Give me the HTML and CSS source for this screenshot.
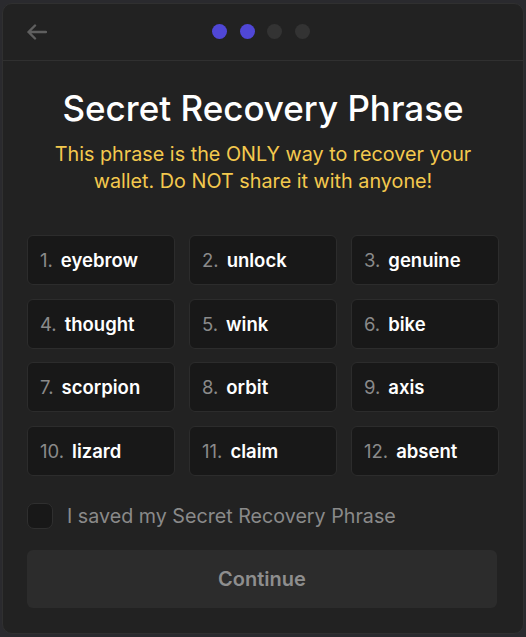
FILE: index.html
```html
<!DOCTYPE html>
<html>
<head>
<meta charset="utf-8">
<link rel="stylesheet" href="styles.css">
</head>
<body>
<div class="panel">
  <div class="header">
    <div class="back">
      <svg width="20" height="16" viewBox="0 0 20 16"><path d="M1.5 8H19M8 1.5L1.5 8L8 14.5" fill="none" stroke="#5f5f5f" stroke-width="2.4" stroke-linecap="round" stroke-linejoin="round"/></svg>
    </div>
    <div class="dots">
      <span class="dot on"></span><span class="dot on"></span><span class="dot"></span><span class="dot"></span>
    </div>
    <div></div>
  </div>
  <div class="content">
    <h1 class="title">Secret Recovery Phrase</h1>
    <p class="warning">This phrase is the ONLY way to recover your wallet. Do NOT share it with anyone!</p>
    <div class="grid">
      <div class="word"><span class="num">1.</span><span class="w">eyebrow</span></div>
      <div class="word"><span class="num">2.</span><span class="w">unlock</span></div>
      <div class="word"><span class="num">3.</span><span class="w">genuine</span></div>
      <div class="word"><span class="num">4.</span><span class="w">thought</span></div>
      <div class="word"><span class="num">5.</span><span class="w">wink</span></div>
      <div class="word"><span class="num">6.</span><span class="w">bike</span></div>
      <div class="word"><span class="num">7.</span><span class="w">scorpion</span></div>
      <div class="word"><span class="num">8.</span><span class="w">orbit</span></div>
      <div class="word"><span class="num">9.</span><span class="w">axis</span></div>
      <div class="word"><span class="num">10.</span><span class="w">lizard</span></div>
      <div class="word"><span class="num">11.</span><span class="w">claim</span></div>
      <div class="word"><span class="num">12.</span><span class="w">absent</span></div>
    </div>
    <label class="check">
      <span class="box"></span>
      <span class="label">I saved my Secret Recovery Phrase</span>
    </label>
    <button class="continue">Continue</button>
  </div>
</div>
</body>
</html>
```

FILE: styles.css
```css
html, body {
  margin: 0;
  padding: 0;
  background: #2a2a2e;
  font-family: Inter, "Noto Sans", sans-serif;
}
body {
  padding: 3px 2px 3px 2px;
}
.panel {
  width: 520px;
  height: 629px;
  background: #222222;
  border: 1px solid #303030;
  border-radius: 10px;
  display: flex;
  flex-direction: column;
}
.header {
  height: 56px;
  border-bottom: 1px solid #303030;
  display: grid;
  grid-template-columns: 1fr auto 1fr;
  align-items: center;
  padding: 0 25px 0 24px;
}
.back {
  display: flex;
  align-items: center;
}
.dots {
  display: flex;
  gap: 12.5px;
  margin-left: -3px;
  margin-top: -1px;
}
.dot {
  width: 15px;
  height: 15px;
  border-radius: 50%;
  background: #333333;
}
.dot.on {
  background: #5047d6;
}
.content {
  padding: 27px 24px 0 24px;
  display: flex;
  flex-direction: column;
}
.title {
  margin: 0;
  font-size: 35px;
  line-height: 40px;
  font-weight: 500;
  color: #ffffff;
  text-align: center;
}
.warning {
  margin: 13px 0 0 0;
  font-size: 19.8px;
  line-height: 27px;
  color: #f4c94e;
  text-align: center;
}
.grid {
  margin-top: 40px;
  display: grid;
  grid-template-columns: repeat(3, 148px);
  column-gap: 14px;
  row-gap: 13.5px;
}
.word {
  height: 48px;
  background: #181818;
  border: 1px solid #2c2c2c;
  border-radius: 6px;
  display: flex;
  align-items: center;
  padding: 0 12px;
  font-size: 18.5px;
}
.num {
  color: #8a8a8a;
  margin-right: 8px;
}
.w {
  color: #ffffff;
  font-weight: 600;
}
.check {
  margin-top: 27px;
  display: flex;
  align-items: center;
  gap: 14px;
}
.box {
  width: 24px;
  height: 24px;
  border: 1px solid #2f2f2f;
  background: #181818;
  border-radius: 7px;
}
.label {
  font-size: 19.7px;
  color: #8a8a8a;
}
.continue {
  margin-top: 21px;
  width: 470px;
  height: 58px;
  border: none;
  border-radius: 6px;
  background: #2c2c2c;
  color: #8e8e8e;
  font-family: Inter, "Noto Sans", sans-serif;
  font-size: 20px;
  font-weight: 600;
}
```
